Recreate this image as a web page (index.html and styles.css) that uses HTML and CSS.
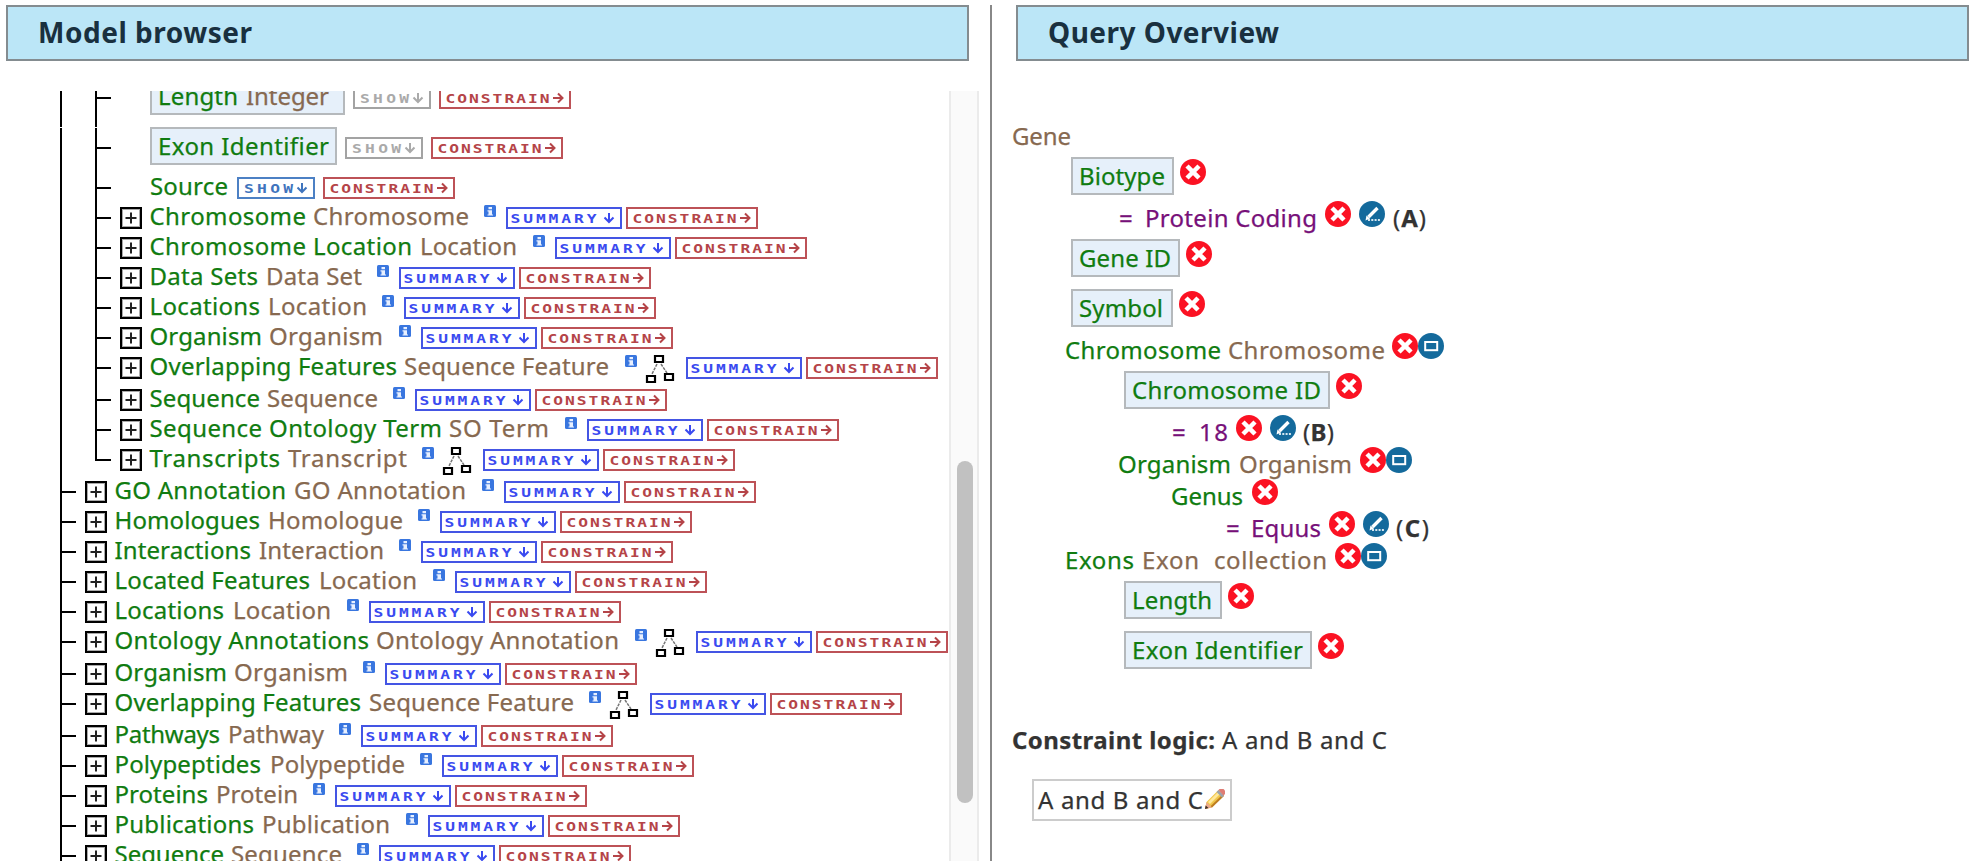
FILE: index.html
```html
<!DOCTYPE html>
<html lang="en">
<head>
<meta charset="utf-8">
<title>Query builder</title>
<link rel="stylesheet" href="styles.css">
</head>
<body>
<main class="builder">
  <section class="pane browser-pane">
    <h1 class="heading" data-w="211">Model browser</h1>
    <div class="scroller">
      <div class="tree" id="tree"></div>
      <div class="track"><div class="thumb"></div></div>
    </div>
  </section>
  <section class="pane query-pane">
    <h1 class="heading" data-w="228">Query Overview</h1>
    <div class="query" id="query"></div>
  </section>
</main>
<script src="app.js"></script>
</body>
</html>
```
FILE: styles.css
```css
* { box-sizing: border-box; }
body {
  margin: 0;
  background: #fff;
  color: #333;
  font: 24px/32px "Noto Sans", "Open Sans", sans-serif;
  overflow: hidden;
}
.builder { display: flex; height: 861px; padding-top: 5px; }
.pane { height: 856px; }
.browser-pane { width: 990px; padding-left: 6px; }
.query-pane { flex: 1; border-left: 2px solid #888; padding-left: 24px; }
.heading {
  margin: 0;
  height: 56px;
  border: 2px solid #848c90;
  background: #bbe6f7;
  color: #19303f;
  font-size: 28px;
  line-height: 38px;
  font-weight: 700;
  padding: 6px 0 0 30px;
  white-space: nowrap;
}
.browser-pane .heading { width: 963px; }
.query-pane .heading { width: 953px; }

.scroller {
  display: flex;
  margin-top: 30px;
  height: 770px;
  overflow: hidden;
}
.tree { width: 943px; margin-top: -13px; flex: none; }
.track {
  width: 30px;
  height: 770px;
  border: solid #ebebeb;
  border-width: 0 2px;
  background: #fafafa;
  padding: 370px 0 0 6px;
}
.thumb { width: 16px; height: 342px; border-radius: 8px; background: #c1c1c1; }

.row { display: flex; align-items: flex-start; height: 30px; }
.row > * { flex: none; }
.row.tall { height: 32px; }
.row.selected { height: 50px; }
.rail { width: 35px; height: 100%; border-left: 2px solid #000; }
.rail.first { margin-left: 54px; }
.row:first-child .rail { height: 49px; }
.rail.last { height: 11px; }
.tick { width: 14px; height: 2px; margin: 9px 9px 0 -33px; background: #000; }
.selected .tick { margin-top: 19px; }
.svg { display: block; overflow: visible; }
.expander { margin: -1px 6px 0 0; }
.label { display: block; white-space: nowrap; -webkit-text-stroke: 0.25px currentColor; }
.row > .label { margin-top: -8px; }
.name { color: #107c10; }
.type { color: #876950; }
.value { color: #771079; }
.info { margin-top: -3px; }
.hier { margin-top: -3px; }
.btn { margin-top: -1px; }
.selected .btn { margin-top: 9px; }
.btn text { font: 700 13px "DejaVu Sans Mono", monospace; }
.chip {
  display: flex;
  height: 38px;
  background: #e6f0fa;
  border: 2px solid #b5b9bc;
  padding-left: 6px;
}
.row > .chip { margin-top: -1px; }
.chip .label { margin-top: 1px; }

.query { margin-top: 56px; margin-left: -5px; }
.qrow { display: flex; align-items: flex-start; }
.qrow > * { flex: none; }
.qrow > .label { margin-top: 3px; }
.qrow > .disc { margin-top: 2px; }
.logic-box {
  display: flex;
  width: 200px;
  height: 42px;
  border: 2px solid #ccc;
  padding-left: 4px;
}
.logic-box .label { margin-top: 3px; }
.logic-box .svg { margin: 8px 0 0 2px; }
```
FILE: app.js
```javascript
const svg = (cls, w, h, body) =>
  `<svg class="svg ${cls}" width="${w}" height="${h}" viewBox="0 0 ${w} ${h}" fill="none">${body}</svg>`;

const icons = {
  plus: svg('expander', 22, 22,
    '<rect x="1" y="1" width="20" height="20" fill="#fff" stroke="#000" stroke-width="2"/>' +
    '<rect x="2.5" y="2.5" width="17" height="17" stroke="#aaa"/>' +
    '<path d="M5.5 11h11M11 5.5v11" stroke="#222" stroke-width="2"/>'),
  info: svg('info', 12, 12,
    '<rect width="12" height="12" rx="1.5" fill="#3976df"/>' +
    '<path d="M4.500 2h3.500v2.200H4.500zM3.500 5.300h4.500V9.500h1V10.500H3.500V9.500h1V6.500h-1z" fill="#e8f0ff"/>'),
  hier: svg('hier', 28, 28,
    '<path d="M11 9L6 19M15 9l6 9" stroke="#777" stroke-width="1.5" stroke-dasharray="3 1"/>' +
    '<g stroke="#000" stroke-width="2.2" fill="#fff"><path d="M9 1h8v6H9zM1 21h8v6H1zM19 19h8v6h-8z"/></g>'),
  del: svg('disc', 26, 26,
    '<circle cx="13" cy="13" r="13" fill="#fb1223"/>' +
    '<path d="M8.6 8.6l8.800 8.800M17.400 8.600l-8.800 8.800" stroke="#fff" stroke-width="4.500" stroke-linecap="square"/>'),
  edit: svg('disc', 26, 26,
    '<circle cx="13" cy="13" r="13" fill="#146a9c"/>' +
    '<path d="M18.5 7L9.5 16" stroke="#fff" stroke-width="3.400"/><path d="M6.500 19.500l1-5 3.500 3z" fill="#fff"/>' +
    '<path d="M9 19h12" stroke="#d5e7f1" stroke-width="2" stroke-dasharray="2 1.3"/>'),
  box: svg('disc', 26, 26,
    '<circle cx="13" cy="13" r="13" fill="#146a9c"/><rect x="7.2" y="9" width="12" height="8.2" stroke="#fff" stroke-width="2"/>'),
  pencil: svg('pencil', 20, 20,
    '<path d="M0 20l1.5-7L13.5 1l5.5 5.5L7 18.5z" fill="#f0c649"/>' +
    '<path d="M3 13L14 2l2 2L5 15z" fill="#ffe89a"/><path d="M5.5 17.2L17.5 5.5l1.5 1.5L7 18.5z" fill="#bd7c22"/>' +
    '<path d="M0 20l1.5-7L7 18.5z" fill="#e9a98b"/><path d="M0 20l.7-3.5L3.5 19z" fill="#3b2b25"/>' +
    '<path d="M11.5 3l2-2L19 6.5l-2 2z" fill="#9ba3ad"/><path d="M13.5 1l1-1h4L20 1.500V5l-1.500 1.500z" fill="#df7d75"/>'),
};

const button = (text, w, tx, tw, color, edge, ax, right) => svg('btn', w, 22,
  `<rect x="1" y="1" width="${w - 2}" height="20" stroke="${edge}" stroke-width="2" fill="#fff"/>` +
  `<text x="${tx / 1.25}" y="15.8" transform="scale(1.25 1)" textLength="${tw / 1.25}" lengthAdjust="spacing" fill="${color}">${text}</text>` +
  (right ? `<path d="M${ax} 11h9M${ax + 5} 6.500l4.500 4.500-4.500 4.500" stroke="${color}" stroke-width="2"/>`
         : `<path d="M${ax} 6v9M${ax - 4.5} 10.500l4.500 4.500 4.500-4.500" stroke="${color}" stroke-width="2"/>`));

const constrain = button('CONSTRAIN', 132, 6.5, 104, '#b54448', '#bd5257', 114, true);
const summary = button('SUMMARY', 116, 4.5, 86, '#3a4af0', '#4455e4', 103, false);
const show = (on) => button('SHOW', 78, 7, 49, on ? '#3f74bd' : '#aaa', on ? '#4c80c4' : '#a3a3a3', 65, false);

// Ink extents sit inside the text advance, so every label starts a little early.
const label = (cls, text, x0, x1) =>
  `<span class="label ${cls}" data-w="${x1 - x0 - 1}">${text}</span>`;

// Lays items out one after another; each entry is [left, width, markup].
function flow(start, items) {
  let at = start, html = '';
  for (const [left, width, markup] of items) {
    html += `<span style="width:${left - at}px"></span>` +
      markup.replace(/^<(\w+)/, `<$1 data-box="${width}"`);
    at = left + width;
  }
  return html;
}
const text = (cls, s, x0, x1) => [x0 - 1, x1 - x0 + 2, label(cls, s, x0, x1)];
const icon = (name, x, w = 26) => [x, w, icons[name]];

// level, name, name end, type, type start, type end, info position, has subclasses
const nodes = [
  [2, 'Chromosome', 305, 'Chromosome', 314, 468, 484],
  [2, 'Chromosome Location', 411, 'Location', 421, 516, 533],
  [2, 'Data Sets', 257, 'Data Set', 267, 361, 377],
  [2, 'Locations', 259, 'Location', 269, 366, 382],
  [2, 'Organism', 261, 'Organism', 270, 382, 399],
  [2, 'Overlapping Features', 396, 'Sequence Feature', 405, 608, 625, true],
  [2, 'Sequence', 259, 'Sequence', 268, 377, 393],
  [2, 'Sequence Ontology Term', 441, 'SO Term', 450, 548, 565],
  [2, 'Transcripts', 279, 'Transcript', 289, 406, 422, true],
  [1, 'GO Annotation', 285, 'GO Annotation', 295, 465, 482],
  [1, 'Homologues', 259, 'Homologue', 269, 402, 418],
  [1, 'Interactions', 250, 'Interaction', 260, 383, 399],
  [1, 'Located Features', 309, 'Location', 320, 416, 433],
  [1, 'Locations', 223, 'Location', 234, 330, 347],
  [1, 'Ontology Annotations', 368, 'Ontology Annotation', 377, 618, 635, true],
  [1, 'Organism', 226, 'Organism', 235, 347, 363],
  [1, 'Overlapping Features', 360, 'Sequence Feature', 370, 573, 589, true],
  [1, 'Pathways', 219, 'Pathway', 229, 323, 339],
  [1, 'Polypeptides', 260, 'Polypeptide', 271, 404, 420],
  [1, 'Proteins', 207, 'Protein', 217, 297, 313],
  [1, 'Publications', 253, 'Publication', 263, 389, 406],
  [1, 'Sequence', 223, 'Sequence', 232, 341, 357],
];

const rails = (level, last) => '<i class="rail first"></i>' +
  (level === 2 ? `<i class="rail${last ? ' last' : ''}"></i>` : '') + '<i class="tick"></i>';

const chip = (x0, x1, inner) => [x0, x1 - x0, `<span class="chip">${inner}</span>`];

let tree =
  `<div class="row selected">${rails(2)}${flow(120, [
    chip(150, 345, label('name', 'Length', 158, 236) + '<span style="width:8px"></span>' + label('type', 'Integer', 246, 327)),
    [353, 78, show(false)], [439, 132, constrain]])}</div>` +
  `<div class="row selected">${rails(2)}${flow(120, [
    chip(150, 337, label('name', 'Exon Identifier', 158, 327)),
    [345, 78, show(false)], [431, 132, constrain]])}</div>` +
  `<div class="row">${rails(2)}${flow(120, [
    text('name', 'Source', 151, 227), [237, 78, show(true)], [323, 132, constrain]])}</div>`;

for (const [level, name, nameEnd, type, typeStart, typeEnd, info, subs] of nodes) {
  const left = level === 2 ? 120 : 85;
  const sum = info + (subs ? 61 : level === 2 ? 22 : 21.5);
  const items = [
    text('name', name, left + 30.5, nameEnd),
    text('type', type, typeStart, typeEnd),
    [info, 12, icons.info],
  ];
  if (subs) items.push([info + 21, 28, icons.hier]);
  items.push([sum, 116, summary], [sum + 120, 132, constrain]);
  tree += `<div class="row${subs ? ' tall' : ''}">${rails(level, name === 'Transcripts')}${icons.plus}${flow(left + 28, items)}</div>`;
}
document.getElementById('tree').innerHTML = tree;

const qchip = (x0, x1, s, t0, t1) => chip(x0, x1, label('name', s, t0, t1));
const rows = [
  [40, text('type', 'Gene', 1013, 1070)],
  [42, qchip(1071, 1174, 'Biotype', 1080, 1164), icon('del', 1180)],
  [40, text('value', '=', 1120, 1135), text('value', 'Protein Coding', 1146, 1316), icon('del', 1325), icon('edit', 1359), text('', '(<b>A</b>)', 1394, 1425)],
  [50, qchip(1071, 1180, 'Gene ID', 1080, 1170), icon('del', 1186)],
  [42, qchip(1071, 1173, 'Symbol', 1080, 1162), icon('del', 1179)],
  [40, text('name', 'Chromosome', 1066, 1220), text('type', 'Chromosome', 1229, 1384), icon('del', 1392), icon('box', 1418)],
  [42, qchip(1124, 1330, 'Chromosome ID', 1133, 1320), icon('del', 1336)],
  [32, text('value', '=', 1173, 1188), text('value', '18', 1200, 1227), icon('del', 1236), icon('edit', 1270), text('', '(<b>B</b>)', 1304, 1333)],
  [32, text('name', 'Organism', 1119, 1230), text('type', 'Organism', 1240, 1351), icon('del', 1360), icon('box', 1386)],
  [32, text('name', 'Genus', 1172, 1242), icon('del', 1252)],
  [32, text('value', '=', 1227, 1242), text('value', 'Equus', 1252, 1320), icon('del', 1329), icon('edit', 1363), text('', '(<b>C</b>)', 1397, 1428)],
  [40, text('name', 'Exons', 1066, 1133), text('type', 'Exon', 1143, 1198), text('type', 'collection', 1215, 1326), icon('del', 1335), icon('box', 1361)],
  [50, qchip(1124, 1222, 'Length', 1133, 1211), icon('del', 1228)],
  [90, qchip(1124, 1312, 'Exon Identifier', 1133, 1302), icon('del', 1318)],
  [58, text('', '<b>Constraint logic:</b>', 1013, 1214), text('', 'A and B and C', 1223, 1386)],
  [42, [1032, 200, `<span class="logic-box">${label('', 'A and B and C', 1038, 1201)}${icons.pencil}</span>`]],
];
document.getElementById('query').innerHTML = rows
  .map(([h, ...items]) => `<div class="qrow" style="height:${h}px">${flow(1011, items)}</div>`).join('');

for (const el of document.querySelectorAll('[data-w]')) {
  const range = document.createRange();
  range.selectNodeContents(el);
  const n = el.textContent.length;
  const want = +el.dataset.w + 3;
  if (n > 1) el.style.letterSpacing = (want - range.getBoundingClientRect().width) / (n - 1) + 'px';
  if (el.classList.contains('label')) el.style.width = want + 'px';
}
for (const el of document.querySelectorAll('.chip, .logic-box')) el.style.width = el.dataset.box + 'px';
```
